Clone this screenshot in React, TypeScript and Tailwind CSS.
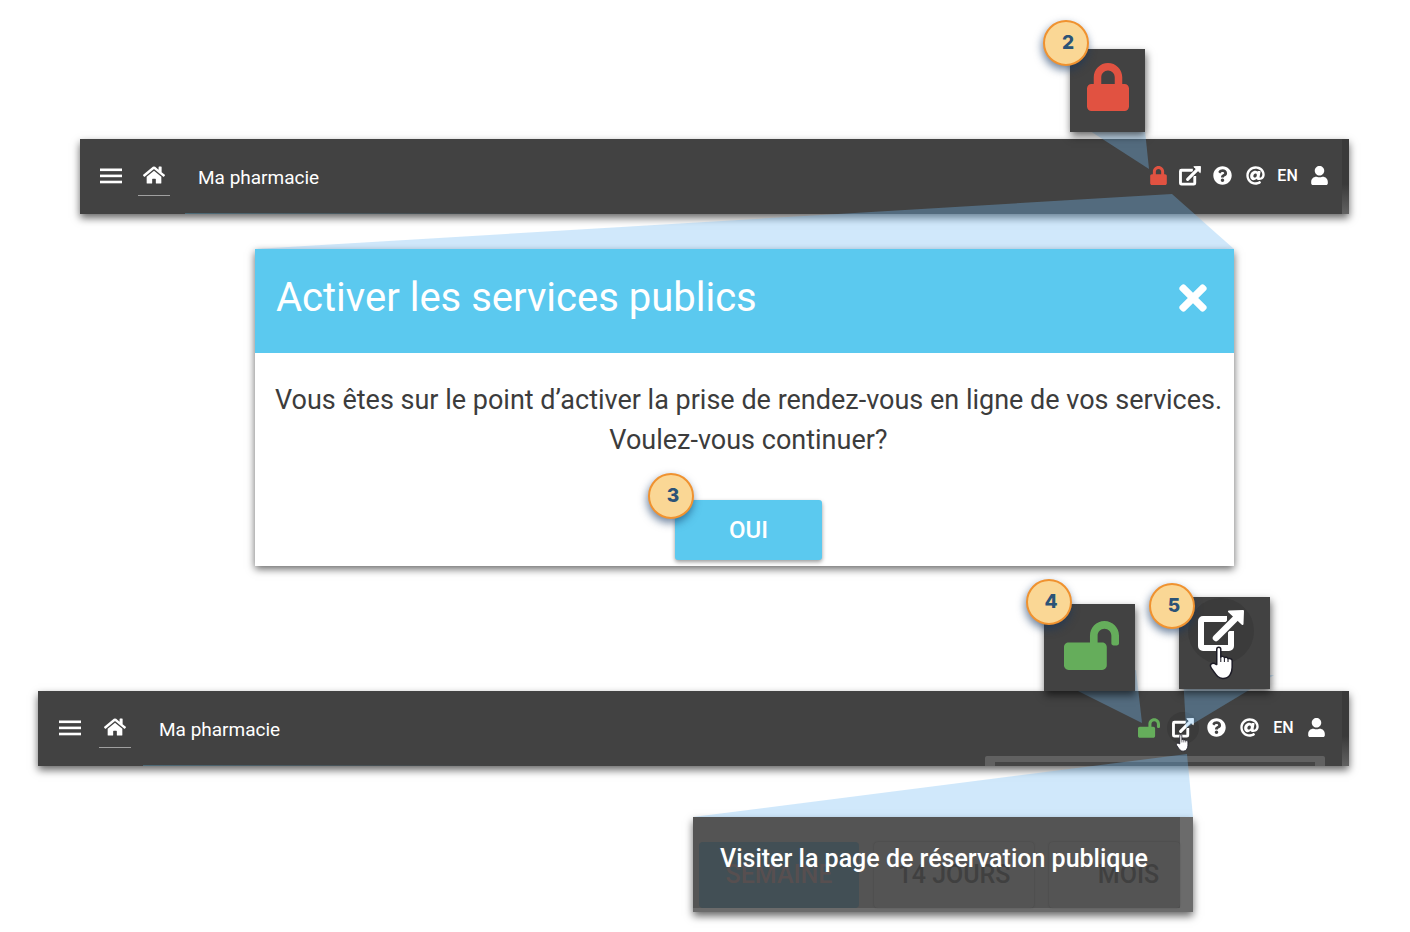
import type { ReactNode } from "react";
import { FaAt, FaHome, FaLock, FaLockOpen, FaQuestionCircle, FaTimes, FaUser } from "react-icons/fa";

function MenuIcon() {
  return (
    <svg viewBox="0 0 22 16" className="w-[22px] h-4" fill="currentColor">
      <rect y="0.5" width="22" height="2.6" />
      <rect y="6.6" width="22" height="2.6" />
      <rect y="12.7" width="22" height="2.6" />
    </svg>
  );
}

function ExternalIcon({ className }: { className: string }) {
  return (
    <svg viewBox="0 0 46 42" className={className} fill="none" stroke="currentColor">
      <path d="M29 9H5a2 2 0 0 0-2 2v25a2 2 0 0 0 2 2h26a2 2 0 0 0 2-2V21" strokeWidth="6" />
      <path d="M19 27L35 11" stroke="#3b3b3b" strokeWidth="9" />
      <path d="M18 28L39 7" strokeWidth="6.500" strokeLinecap="round" />
      <path d="M31 1.500L45 1L44.500 14Z" fill="currentColor" strokeWidth="2" strokeLinejoin="round" />
    </svg>
  );
}

function HandCursor({ className }: { className: string }) {
  return (
    <svg viewBox="0 0 24 32" className={className}>
      <path
        d="M8 17.500V3.200C8 .6 11.800.6 11.800 3.200V10.500c.9-1.300 3.100-.9 3.400.7.900-1.100 3.100-.7 3.400.9 1.200-.9 3.900-.1 3.900 1.800V20c0 5-2.500 10.500-8.500 10.500-5 .3-7-4-10.800-9.200-2.800-3.900.3-6.700 4.600-3.800Z"
        fill="white"
        stroke="#1c1b26"
        strokeWidth="1.400"
        strokeLinejoin="round"
      />
      <path d="M11.800 10.500V15M15.200 11.500V15M18.600 12.500V15" stroke="#1c1b26" />
    </svg>
  );
}

function Step({ n, className }: { n: number; className: string }) {
  return (
    <span
      className={`absolute z-30 flex size-[46px] items-center justify-center rounded-full border-2 border-[#f0922f] bg-[#fad795] pl-1 font-[Inter,sans-serif] text-[19px] font-extrabold text-[#2b5377] shadow-[-1px_4px_8px_rgba(15,50,95,0.6)] ${className}`}
    >
      {n}
    </span>
  );
}

function Beam({ box, points, className }: { box: string; points: string; className: string }) {
  return (
    <svg
      viewBox={box}
      preserveAspectRatio="none"
      className={`pointer-events-none absolute z-10 ${className}`}
      aria-hidden="true"
    >
      <polygon points={points} fill="rgb(118,188,243)" fillOpacity="0.34" />
    </svg>
  );
}

type BarProps = {
  className: string;
  navClass: string;
  toolsClass: string;
  lock: ReactNode;
  external: ReactNode;
  children?: ReactNode;
};

function TopBar({ className, navClass, toolsClass, lock, external, children }: BarProps) {
  const tool = "flex size-8 items-center justify-center";
  return (
    <header
      className={`relative flex h-[75px] items-center bg-[#424242] pb-0.5 text-white shadow-[0_4px_8px_rgba(0,0,0,0.6)] ${className}`}
    >
      <nav className={`flex items-center ${navClass}`}>
        <button aria-label="Menu">
          <MenuIcon />
        </button>
        <a href="#accueil" aria-label="Accueil" className="flex h-10 w-8 items-center justify-center border-b border-[#a0a0a0]">
          <FaHome className="size-[22px]" />
        </a>
      </nav>
      <h1 className="ml-7 pt-1.5 text-[19px]">Ma pharmacie</h1>
      <div className={`ml-auto flex items-center justify-between ${toolsClass}`}>
        <button aria-label="Services publics" className={tool}>{lock}</button>
        <button aria-label="Page de réservation" className={tool}>{external}</button>
        <button aria-label="Aide" className={tool}><FaQuestionCircle className="size-[19px]" /></button>
        <button aria-label="Contact" className={tool}><FaAt className="size-[19px]" /></button>
        <button className={`${tool} text-base font-medium`}>EN</button>
        <button aria-label="Profil" className={tool}><FaUser className="size-[19px]" /></button>
      </div>
      <div className="absolute inset-y-0 right-0 w-[7px] bg-linear-to-b from-[#3a3a3a] from-60% to-[#626262]" />
      <div className="absolute bottom-0 left-[105px] h-px w-[350px] bg-linear-to-r from-[#4d6a77] to-[#424242]" />
      {children}
    </header>
  );
}

const tile = "relative z-20 flex items-center justify-center bg-[#424242] shadow-[1px_4px_8px_rgba(0,0,0,0.6)]";

export default function App() {
  return (
    <main className="overflow-hidden bg-white pt-[49px] pb-5 font-[Roboto,sans-serif]">
      {/* Locked state */}
      <div className="mr-[265px] flex justify-end">
        <div className="relative">
          <Beam box="0 0 80 120" points="20,82 75,82 79,120" className="top-0 left-0 h-[120px] w-20" />
          <div className={`${tile} h-[83px] w-[75px] pb-2`}>
            <FaLock className="size-12 text-[#e15241]" />
          </div>
          <Step n={2} className="-top-[29px] -left-[27px]" />
        </div>
      </div>
      <TopBar
        className="mt-[7px] mr-[61px] ml-20"
        navClass="gap-4 pl-5"
        toolsClass="mr-[13px] w-[194px]"
        lock={<FaLock className="size-[19px] text-[#e15241]" />}
        external={<ExternalIcon className="h-5 w-[22px]" />}
      />

      {/* Activation dialog */}
      <section className="relative mt-[35px] mr-44 ml-[255px]">
        <Beam box="0 0 979 55" points="0,55 917,0 979,55" className="bottom-full left-0 h-[55px] w-full" />
        <div role="dialog" aria-labelledby="dialog-title" className="bg-white pb-1.5 shadow-[0_3px_8px_rgba(0,0,0,0.6)]">
          <div className="flex h-[104px] items-center justify-between bg-[#5bc9ef] px-[21px] pb-1.5 text-white">
            <h2 id="dialog-title" className="text-[40px]">Activer les services publics</h2>
            <button aria-label="Fermer">
              <FaTimes className="size-10" />
            </button>
          </div>
          <div className="flex flex-col items-center pt-[27px] pl-2">
            <p className="text-center text-[27px] leading-10 text-[#3c3c3c]">
              Vous êtes sur le point d’activer la prise de rendez-vous en ligne de vos services.
              <br />
              Voulez-vous continuer?
            </p>
            <div className="relative mt-10">
              <button className="h-[60px] w-[147px] rounded-[3px] bg-[#5bc9ef] text-2xl font-medium text-white shadow-[0_2px_4px_rgba(0,0,0,0.4)]">
                OUI
              </button>
              <Step n={3} className="-top-[27px] -left-[27px]" />
            </div>
          </div>
        </div>
      </section>

      {/* Unlocked state */}
      <div className="mt-[31px] mr-[140px] flex h-[94px] justify-end gap-11">
        <div className="relative self-end">
          <Beam box="0 0 100 120" points="20,80 92,66 98,119" className="top-0 left-0 h-[120px] w-[100px]" />
          <div className={`${tile} h-[87px] w-[91px] pb-1 pl-1`}>
            <FaLockOpen className="h-[49px] w-[55px] text-[#65ad5b]" />
          </div>
          <Step n={4} className="-top-[25px] -left-[18px]" />
        </div>
        <div className="relative">
          <Beam box="0 0 96 132" points="4,78 95,78 7,131" className="top-0 left-0 h-[132px] w-24" />
          <div className={`${tile} h-[92px] w-[91px] overflow-hidden pr-2 pb-6`}>
            <div className="relative flex size-[66px] items-center justify-center rounded-full bg-[#3b3b3b] text-white">
              <ExternalIcon className="h-[42px] w-[46px]" />
              <HandCursor className="absolute top-12 left-5 h-[34px] w-[26px]" />
            </div>
          </div>
          <Step n={5} className="-top-[14px] -left-[30px]" />
        </div>
      </div>
      <TopBar
        className="mr-[61px] ml-[38px]"
        navClass="gap-[18px] pl-[21px]"
        toolsClass="mr-4 w-[200px]"
        lock={<FaLockOpen className="h-5 w-[22px] text-[#65ad5b]" />}
        external={
          <span className="relative flex size-8 items-center justify-center rounded-full bg-[#3b3b3b]">
            <ExternalIcon className="h-5 w-[22px]" />
            <HandCursor className="absolute top-[22px] left-2 h-[18px] w-3.5" />
          </span>
        }
      >
        <div className="absolute right-6 bottom-0 h-2.5 w-[340px] rounded-t-xs bg-[#616161] px-2.5 pt-1.5">
          <div className="h-1 bg-[#454545]" />
        </div>
      </TopBar>

      {/* Tooltip over the calendar view switch */}
      <div className="mt-[51px] mr-[217px] flex justify-end">
        <div className="relative">
          <Beam box="0 0 500 63" points="0,63 494,0 500,63" className="bottom-full left-0 h-[63px] w-full" />
          <div className="w-[500px] bg-[#6b6b6b] pr-[13px] pb-1 shadow-[0_4px_8px_rgba(0,0,0,0.6)]">
            <div className="flex h-[91px] items-end gap-[15px] bg-[#545454] pl-1.5 text-[25px] font-medium text-[#404040]">
              <button className="h-[66px] w-40 rounded-sm bg-[#424f55] text-[#574f50]">SEMAINE</button>
              <button className="h-[66px] w-40 rounded-sm shadow-[0_0_2px_rgba(0,0,0,0.2)]">14 JOURS</button>
              <button className="h-[66px] flex-1 rounded-sm pl-7 shadow-[0_0_2px_rgba(0,0,0,0.2)]">MOIS</button>
            </div>
          </div>
          <p role="tooltip" className="absolute top-[22px] left-[27px] text-[25px] leading-10 font-medium whitespace-nowrap text-white">
            Visiter la page de réservation publique
          </p>
        </div>
      </div>
    </main>
  );
}
